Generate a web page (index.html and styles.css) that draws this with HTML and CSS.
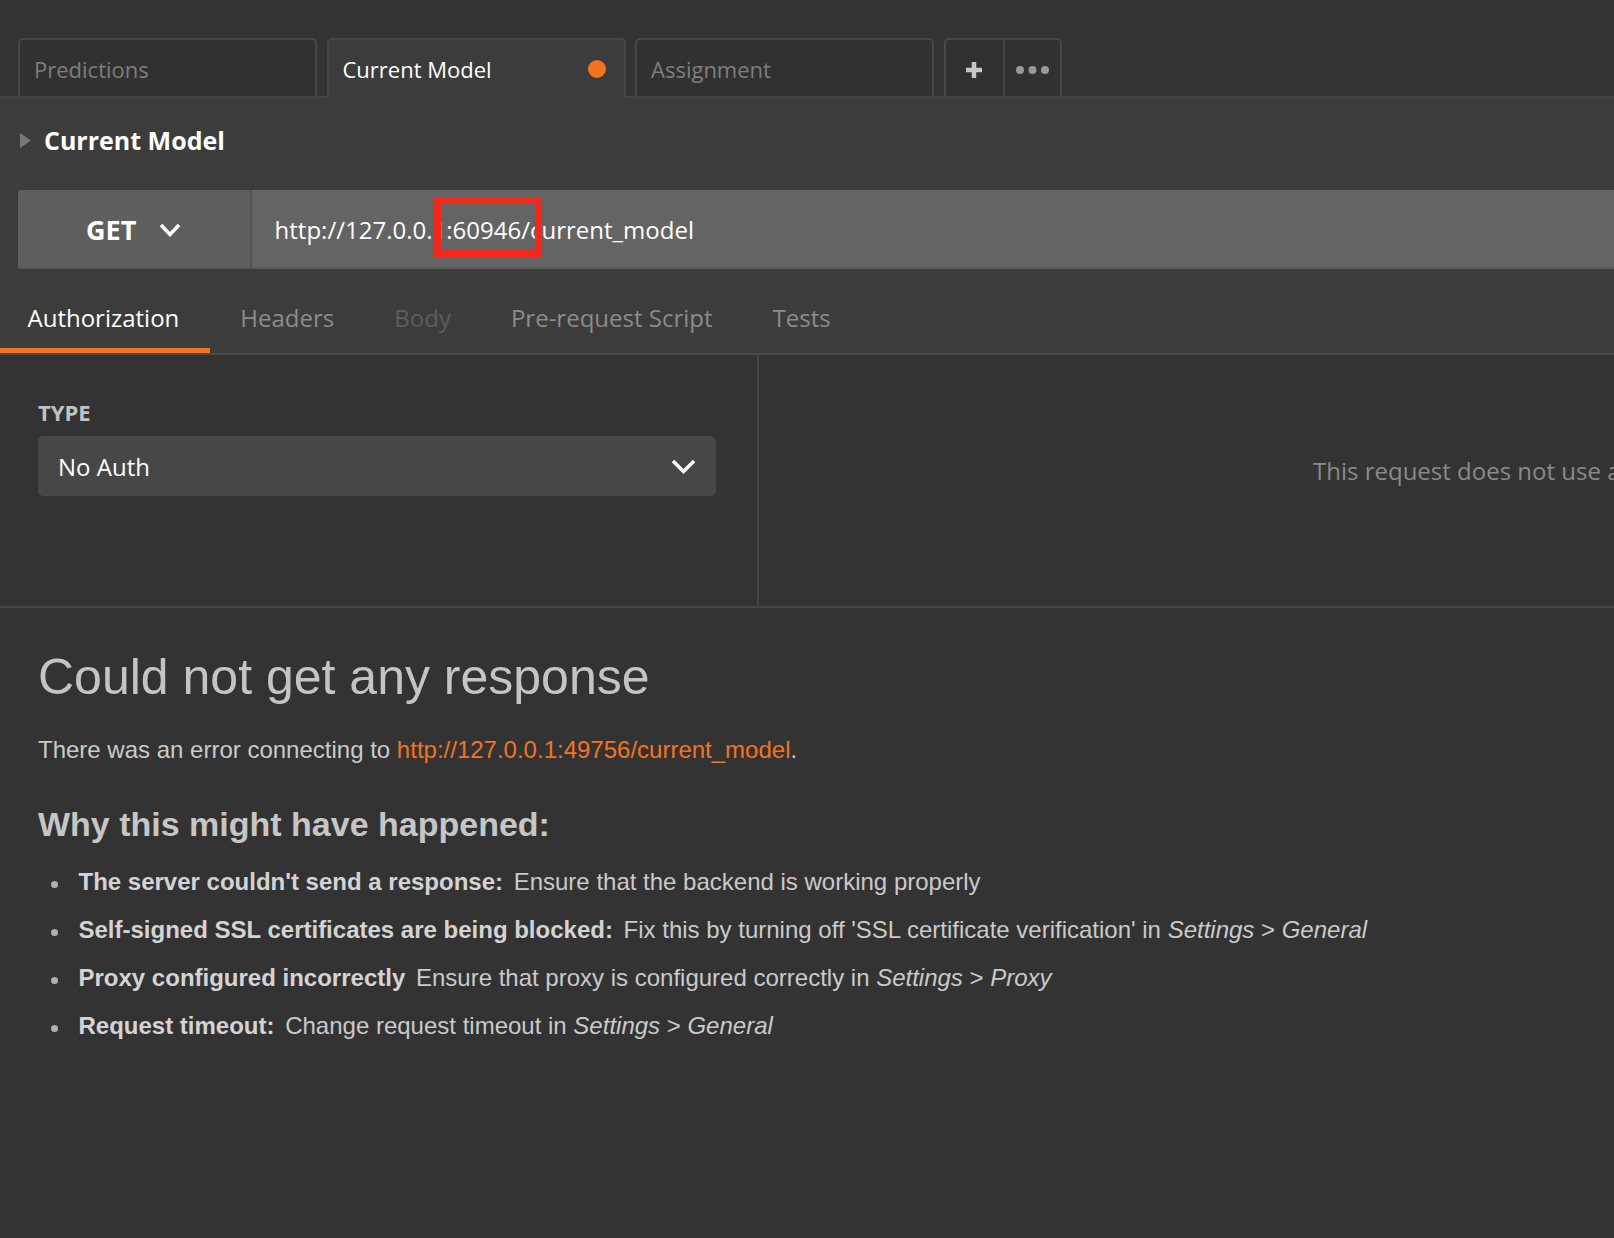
FILE: index.html
```html
<!DOCTYPE html>
<html>
<head>
<meta charset="utf-8">
<title>Current Model</title>
<link rel="stylesheet" href="styles.css">
</head>
<body>
<div class="app">
  <div class="tabbar">
    <div class="tab"><span class="tab-label">Predictions</span></div>
    <div class="tab active"><span class="tab-label">Current Model</span><span class="dot"></span></div>
    <div class="tab"><span class="tab-label">Assignment</span></div>
    <div class="tab-actions">
      <div class="tab-btn">
        <svg width="16" height="16" viewBox="0 0 16 16"><path d="M8 0V16M0 8H16" stroke="#c8c8c8" stroke-width="4.5" fill="none"/></svg>
      </div>
      <div class="tab-btn">
        <svg width="33" height="8" viewBox="0 0 33 8"><circle cx="4" cy="4" r="4" fill="#999"/><circle cx="16.5" cy="4" r="4" fill="#999"/><circle cx="29" cy="4" r="4" fill="#999"/></svg>
      </div>
    </div>
  </div>

  <div class="panel">
    <div class="req-title">
      <svg class="caret" width="11" height="15" viewBox="0 0 11 15"><polygon points="0,0 11,7.5 0,15" fill="#787878"/></svg>
      <span>Current Model</span>
    </div>
    <div class="urlbar">
      <div class="method">
        <span>GET</span>
        <svg width="22" height="14" viewBox="0 0 22 14"><polyline points="2,2 11,11.5 20,2" stroke="#fff" stroke-width="3.5" fill="none"/></svg>
      </div>
      <div class="url">http://127.0.0.1:60946/current_model</div>
      <div class="highlight"></div>
    </div>
    <div class="req-tabs">
      <div class="req-tab active">Authorization</div>
      <div class="req-tab">Headers</div>
      <div class="req-tab disabled">Body</div>
      <div class="req-tab">Pre-request Script</div>
      <div class="req-tab">Tests</div>
    </div>
  </div>

  <div class="auth">
    <div class="auth-left">
      <div class="label">TYPE</div>
      <div class="select">
        <span>No Auth</span>
        <svg width="25" height="15" viewBox="0 0 25 15"><polyline points="2,2 12.5,12.5 23,2" stroke="#fff" stroke-width="3.5" fill="none"/></svg>
      </div>
    </div>
    <div class="auth-right">This request does not use any authorization.</div>
  </div>

  <div class="response">
    <h1 class="resp-title">Could not get any response</h1>
    <p class="lead">There was an error connecting to <a class="link" href="#">http://127.0.0.1:49756/current_model</a>.</p>
    <h2 class="why">Why this might have happened:</h2>
    <ul class="reasons">
      <li><b>The server couldn't send a response:</b> Ensure that the backend is working properly</li>
      <li><b>Self-signed SSL certificates are being blocked:</b> Fix this by turning off 'SSL certificate verification' in <i>Settings</i> &gt; <i>General</i></li>
      <li><b>Proxy configured incorrectly</b> Ensure that proxy is configured correctly in <i>Settings</i> &gt; <i>Proxy</i></li>
      <li><b>Request timeout:</b> Change request timeout in <i>Settings</i> &gt; <i>General</i></li>
    </ul>
  </div>
</div>
</body>
</html>
```

FILE: styles.css
```css
* { box-sizing: border-box; margin: 0; padding: 0; }
html, body { width: 1614px; height: 1238px; overflow: hidden; background: #333333; }
body { font-family: "Open Sans", "Liberation Sans", sans-serif; }

.app { display: flex; flex-direction: column; height: 1238px; }

/* top tab bar */
.tabbar {
  display: flex; align-items: flex-end; gap: 9.5px;
  height: 98px; padding-left: 18px;
  border-bottom: 2px solid #464646;
  background: #333333;
}
.tab {
  width: 299px; height: 58px;
  display: flex; align-items: center; justify-content: space-between;
  padding: 2px 18px 0 14px;
  border: 2px solid #474747; border-bottom: 0;
  border-radius: 5px 5px 0 0;
  background: #313131;
  font-size: 22px; color: #7e7e7e;
}
.tab.active {
  height: 60px; margin-bottom: -2px; padding-top: 0;
  background: #3c3c3c; color: #ffffff;
}
.dot { width: 18px; height: 18px; border-radius: 50%; background: #f4731f; }
.tab-actions {
  display: flex; height: 58px;
  border: 2px solid #474747; border-bottom: 0;
  border-radius: 5px 5px 0 0;
  background: #313131;
}
.tab-btn { width: 57px; display: flex; align-items: center; justify-content: center; padding-top: 3px; }
.tab-btn + .tab-btn { border-left: 2px solid #474747; }

/* request panel */
.panel { background: #3c3c3c; }
.req-title {
  height: 84px; display: flex; align-items: center; gap: 13px;
  padding-left: 20px;
  font-weight: 700; font-size: 25px; color: #ffffff;
}
.urlbar {
  position: relative; display: flex;
  height: 79px; margin: 8px 0 0 18px;
  border-radius: 3px 0 0 3px; overflow: hidden;
}
.method {
  width: 234px; display: flex; align-items: center; gap: 23px;
  padding-left: 68px;
  background: #5f5f5f; border-right: 2px solid #555555;
  box-shadow: inset 0 -2px 0 #565656;
  font-weight: 700; font-size: 27px; color: #ffffff;
}
.url {
  flex: 1; display: flex; align-items: center;
  padding-left: 22.6px;
  background: #646464;
  box-shadow: inset 0 -2px 0 #5a5a5a;
  font-size: 24px; color: #ffffff; white-space: nowrap;
}
.highlight {
  position: absolute; left: 416px; top: 7px;
  width: 108px; height: 60px;
  border: 7px solid #f3281c;
}
.req-tabs { display: flex; height: 86px; border-bottom: 2px solid #4a4a4a; }
.req-tab {
  height: 84px;
  padding: 33.4px 30px 13.6px;
  line-height: 32px; font-size: 24px; color: #8c8c8c;
  border-bottom: 5px solid transparent;
  white-space: nowrap;
}
.req-tab:first-child { padding-left: 27.5px; padding-right: 31px; }
.req-tab.active { color: #ffffff; border-bottom-color: #f4731f; }
.req-tab.disabled { color: #5d5d5d; }

/* auth */
.auth { display: flex; height: 253px; border-bottom: 2px solid #454545; background: #333333; }
.auth-left {
  width: 759px; border-right: 2px solid #454545;
  padding: 43.5px 41.5px 0 38px;
}
.label { font-weight: 700; font-size: 22px; line-height: 26px; color: #c2c2c2; }
.select {
  margin-top: 11.5px; height: 60px;
  display: flex; align-items: center; justify-content: space-between;
  padding: 0 20px;
  border-radius: 5px; background: #474747;
  font-size: 24px; color: #ffffff;
}
.auth-right {
  flex: 1; overflow: hidden; white-space: nowrap;
  padding: 100.7px 0 0 554px;
  font-size: 24px; line-height: 30px; color: #8a8a8a;
}

/* response */
.response {
  flex: 1; padding: 38.7px 38px 0;
  font-family: "Liberation Sans", Arial, sans-serif;
  color: #cacaca; background: #333333;
}
.resp-title { font-size: 50px; line-height: 60px; font-weight: 400; color: #c4c4c4; }
.lead { margin-top: 28px; font-size: 24px; line-height: 30px; }
.link { color: #f4731f; text-decoration: none; }
.why { margin-top: 39px; font-size: 34px; line-height: 40px; font-weight: 700; color: #c6c6c6; }
.reasons { margin-top: 14px; list-style: none; }
.reasons li { font-size: 24px; line-height: 48px; white-space: nowrap; }
.reasons li::before {
  content: ""; display: inline-block;
  width: 7px; height: 7px; border-radius: 50%;
  background: #b0b0b0;
  margin: 0 20.5px 0 13px; vertical-align: 2px;
}
.reasons b { font-weight: 700; color: #d4d4d4; margin-right: 4px; }
.reasons i { font-style: italic; }
```
